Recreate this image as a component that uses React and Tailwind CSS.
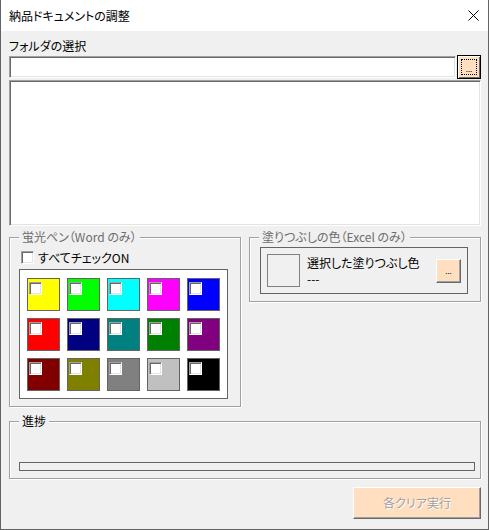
import React from 'react';

// 色見本（蛍光ペン）
const swatchRows = [
  ['bg-[#ffff00]', 'bg-[#00ff00]', 'bg-[#00ffff]', 'bg-[#ff00ff]', 'bg-[#0000ff]'],
  ['bg-[#ff0000]', 'bg-[#000080]', 'bg-[#008080]', 'bg-[#008000]', 'bg-[#800080]'],
  ['bg-[#800000]', 'bg-[#808000]', 'bg-[#808080]', 'bg-[#c0c0c0]', 'bg-[#000000]'],
];

const sunken =
  'bg-white border border-t-[#a0a0a0] border-l-[#a0a0a0] border-b-white border-r-white shadow-[inset_1px_1px_0_#696969,inset_-1px_-1px_0_#e3e3e3]';

const CheckBox = () => <span className={`block w-[13px] h-[13px] shrink-0 ${sunken}`} />;

const Group = ({ label, muted, className, children }) => (
  <div className={`relative border border-[#a0a0a0] shadow-[inset_1px_1px_0_#fff,1px_1px_0_#fff] ${className}`}>
    <span
      className={`absolute left-[9px] -top-[9px] bg-[#f0f0f0] px-[3px] text-[12px] leading-[16px] whitespace-nowrap ${
        muted ? 'text-[#6d6d6d]' : 'text-black'
      }`}
    >
      {label}
    </span>
    {children}
  </div>
);

const PeachButton = ({ className, children }) => (
  <div
    className={`bg-[#ffdfc0] border border-t-white border-l-white border-b-[#696969] border-r-[#696969] shadow-[inset_-1px_-1px_0_#a0a0a0] flex items-center justify-center ${className}`}
  >
    {children}
  </div>
);

export default function App() {
  return (
    <div
      className="w-[489px] h-[530px] bg-[#f0f0f0] border-x border-b border-[#646464] text-black text-[12px] [font-feature-settings:'palt'] overflow-hidden"
      style={{ fontFamily: '"Noto Sans CJK JP", "Noto Sans", sans-serif' }}
    >
      {/* タイトルバー */}
      <div className="h-[31px] bg-white flex items-center justify-between pl-[8px] pr-[9px]">
        <span className="text-[12px] leading-[16px]">納品ドキュメントの調整</span>
        <svg width="11" height="11" viewBox="0 0 11 11" className="mt-[-1px]">
          <path d="M0.5 0.5 L10.5 10.5 M10.5 0.5 L0.5 10.5" stroke="#000" strokeWidth="1" fill="none" />
        </svg>
      </div>

      <div className="pl-[8px] flex flex-col">
        <div className="mt-[6px] h-[18px] leading-[18px]">フォルダの選択</div>

        <div className="h-[24px] flex items-center">
          <div className={`w-[447px] h-[22px] ${sunken}`} />
          <div className="ml-[1px] w-[24px] h-[24px] border border-black bg-[#ffdfc0] shadow-[inset_1px_1px_0_#fff,inset_-1px_-1px_0_#696969] p-[3px] flex">
            <div className="flex-1 border border-dotted border-black flex items-end justify-center">
              <span className="text-[8px] leading-[8px] mb-[1px]">...</span>
            </div>
          </div>
        </div>

        <div className={`mt-[1px] w-[472px] h-[146px] ${sunken}`} />

        <div className="mt-[11px] flex items-start gap-[8px]">
          <Group label="蛍光ペン（Word のみ）" muted className="w-[232px] h-[170px] pt-[13px] pl-[9px]">
            <div className="flex items-center h-[13px] ml-[2px]">
              <CheckBox />
              <span className="ml-[4px] leading-[13px]">すべてチェックON</span>
            </div>
            <div className="mt-[5px] w-[209px] h-[130px] bg-white border border-[#646464] pt-[8px] pl-[7px] grid grid-cols-[repeat(5,33px)] gap-[7px] content-start">
              {swatchRows.flat().map((c, i) => (
                <div key={i} className={`w-[33px] h-[33px] border border-[#646464] pt-[3px] pl-[1px] ${c}`}>
                  <CheckBox />
                </div>
              ))}
            </div>
          </Group>

          <Group label="塗りつぶしの色（Excel のみ）" muted className="w-[232px] h-[65px]">
            <div className="ml-[10px] mt-[9px] w-[208px] h-[47px] border border-[#646464] flex items-center pl-[6px] pr-[6px]">
              <div className="w-[33px] h-[33px] border border-[#808080] bg-[#f0f0f0]" />
              <div className="ml-[7px] leading-[16px]">
                <div>選択した塗りつぶし色</div>
                <div>---</div>
              </div>
              <PeachButton className="ml-auto w-[25px] h-[24px]">
                <span className="text-[8px] leading-[8px]">...</span>
              </PeachButton>
            </div>
          </Group>
        </div>

        <Group label="進捗" className="mt-[14px] w-[472px] h-[58px] pt-[40px] pl-[9px]">
          <div className="w-[456px] h-[9px] border border-[#646464] bg-[#f0f0f0]" />
        </Group>

        <PeachButton className="mt-[8px] ml-[344px] w-[128px] h-[32px]">
          <span className="text-[12px] text-[#a0a0a0] [text-shadow:1px_1px_0_#fff]">各クリア実行</span>
        </PeachButton>
      </div>
    </div>
  );
}
